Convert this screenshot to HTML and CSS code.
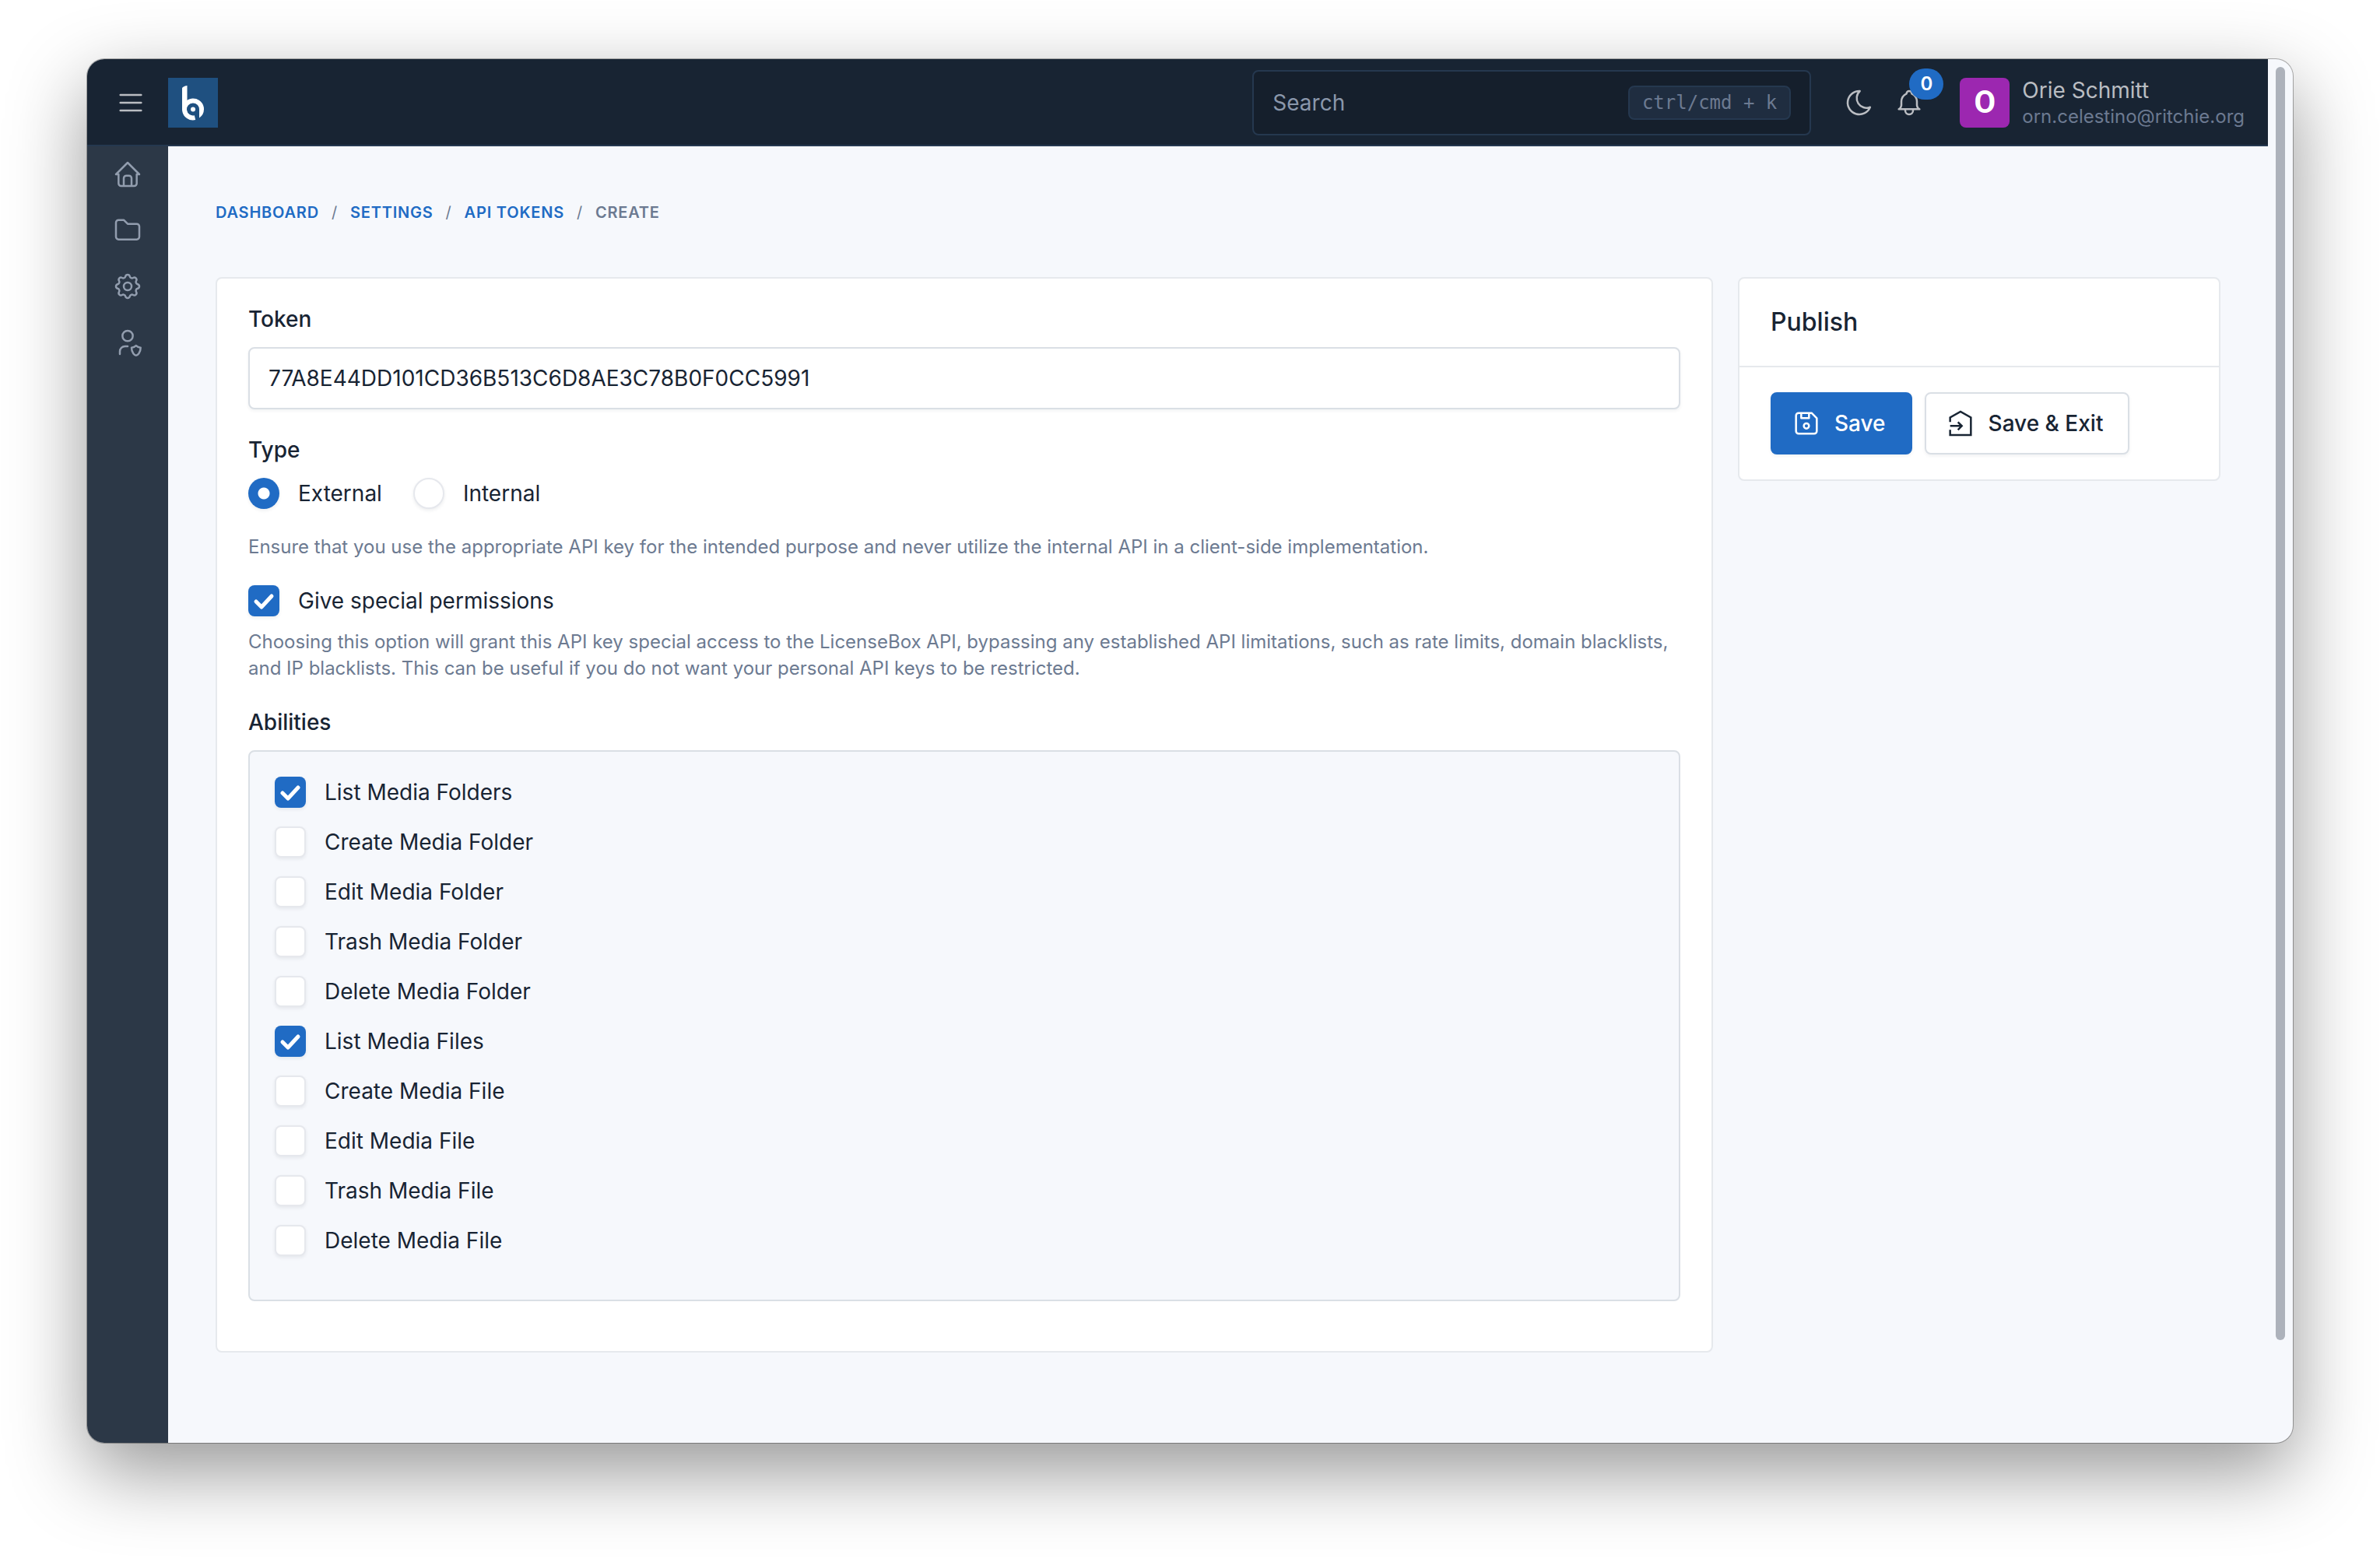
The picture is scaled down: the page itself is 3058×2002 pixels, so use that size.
FILE: index.html
```html
<!DOCTYPE html>
<html lang="en">
<head>
<meta charset="utf-8">
<title>Create API token</title>
<meta name="viewport" content="width=device-width, initial-scale=1">
<link rel="stylesheet" href="styles.css">
</head>
<body>
<div class="window">
  <div class="app">
    <header class="topbar">
      <button class="icon-button menu-toggle" type="button" aria-label="Toggle menu">
        <svg class="icon" viewBox="0 0 24 24"><path d="M4 6h16M4 12h16M4 18h16"/></svg>
      </button>
      <a class="logo" href="#" aria-label="Home">
        <svg viewBox="0 0 64 64"><path class="logo-fill" d="M18 41V13.500Q18.500 11 24.500 10V34zM40 40H46Q46 47.500 40 51.500z"/><path class="logo-stroke" d="M34.500 51.200A11 11 0 1 1 43 41"/><circle class="logo-fill" cx="32" cy="40.500" r="3"/></svg>
      </a>
      <label class="search">
        <input class="search-input" type="search" placeholder="Search" aria-label="Search">
        <kbd class="shortcut">ctrl/cmd + k</kbd>
      </label>
      <nav class="tools">
        <button class="icon-button" type="button" aria-label="Dark mode">
          <svg class="icon" viewBox="0 0 24 24"><path d="M12 3c.132 0 .263 0 .393 0a7.500 7.500 0 0 0 7.920 12.446a9 9 0 1 1 -8.313 -12.454z"/></svg>
        </button>
        <button class="icon-button" type="button" aria-label="Notifications">
          <svg class="icon" viewBox="0 0 24 24"><path d="M10 5a2 2 0 1 1 4 0a7 7 0 0 1 4 6v3a4 4 0 0 0 2 3h-16a4 4 0 0 0 2 -3v-3a7 7 0 0 1 4 -6M9 17v1a3 3 0 0 0 6 0v-1"/></svg>
          <span class="badge">0</span>
        </button>
      </nav>
      <a class="user" href="#">
        <span class="avatar">O</span>
        <span class="user-text">
          <span class="user-name">Orie Schmitt</span>
          <span class="user-email">orn.celestino@ritchie.org</span>
        </span>
      </a>
    </header>
    <div class="body">
      <nav class="sidebar" aria-label="Main">
        <a class="side-link" href="#" aria-label="Dashboard"><svg class="icon" viewBox="0 0 24 24"><path d="M5 12H3l9-9 9 9h-2M5 12v7a2 2 0 0 0 2 2h10a2 2 0 0 0 2-2v-7M9 21v-6a2 2 0 0 1 2-2h2a2 2 0 0 1 2 2v6"/></svg></a>
        <a class="side-link" href="#" aria-label="Media"><svg class="icon" viewBox="0 0 24 24"><path d="M5 4h4l3 3h7a2 2 0 0 1 2 2v8a2 2 0 0 1-2 2H5a2 2 0 0 1-2-2V6a2 2 0 0 1 2-2"/></svg></a>
        <a class="side-link" href="#" aria-label="Settings"><svg class="icon" viewBox="0 0 24 24"><path d="M10.325 4.317c.426 -1.756 2.924 -1.756 3.350 0a1.724 1.724 0 0 0 2.573 1.066c1.543 -.940 3.310 .826 2.370 2.370a1.724 1.724 0 0 0 1.065 2.572c1.756 .426 1.756 2.924 0 3.350a1.724 1.724 0 0 0 -1.066 2.573c.940 1.543 -.826 3.310 -2.370 2.370a1.724 1.724 0 0 0 -2.572 1.065c-.426 1.756 -2.924 1.756 -3.350 0a1.724 1.724 0 0 0 -2.573 -1.066c-1.543 .940 -3.310 -.826 -2.370 -2.370a1.724 1.724 0 0 0 -1.065 -2.572c-1.756 -.426 -1.756 -2.924 0 -3.350a1.724 1.724 0 0 0 1.066 -2.573c-.940 -1.543 .826 -3.310 2.370 -2.370c1 .608 2.296 .070 2.572 -1.065z"/><circle cx="12" cy="12" r="3"/></svg></a>
        <a class="side-link" href="#" aria-label="Administration"><svg class="icon" viewBox="0 0 24 24"><path d="M6 21v-2a4 4 0 0 1 4-4h2M22 16c0 4-2.500 6-3.500 6s-3.500-2-3.500-6c1 0 2.500-.500 3.500-1.500c1 1 2.500 1.500 3.500 1.500zM8 7a4 4 0 1 0 8 0a4 4 0 0 0-8 0"/></svg></a>
      </nav>
      <main class="content">
        <nav aria-label="Breadcrumb">
          <ol class="breadcrumb">
            <li><a href="#">Dashboard</a></li>
            <li><a href="#">Settings</a></li>
            <li><a href="#">API Tokens</a></li>
            <li aria-current="page">Create</li>
          </ol>
        </nav>
        <form class="row">
          <div class="col-main">
            <section class="card card-body">
              <div class="field">
                <label class="label" for="token">Token</label>
                <input class="text-input" id="token" type="text" value="77A8E44DD101CD36B513C6D8AE3C78B0F0CC5991">
              </div>
              <fieldset class="field">
                <legend class="label">Type</legend>
                <div class="radios">
                  <label class="check"><input class="box round" type="radio" name="type" checked>External</label>
                  <label class="check"><input class="box round" type="radio" name="type">Internal</label>
                </div>
                <p class="hint type-hint">Ensure that you use the appropriate API key for the intended purpose and never utilize the internal API in a client-side implementation.</p>
              </fieldset>
              <div class="field">
                <label class="check"><input class="box" type="checkbox" checked>Give special permissions</label>
                <p class="hint">Choosing this option will grant this API key special access to the LicenseBox API, bypassing any established API limitations, such as rate limits, domain blacklists, and IP blacklists. This can be useful if you do not want your personal API keys to be restricted.</p>
              </div>
              <fieldset class="field">
                <legend class="label">Abilities</legend>
                <div class="abilities">
                  <label class="check"><input class="box" type="checkbox" checked>List Media Folders</label>
                  <label class="check"><input class="box" type="checkbox">Create Media Folder</label>
                  <label class="check"><input class="box" type="checkbox">Edit Media Folder</label>
                  <label class="check"><input class="box" type="checkbox">Trash Media Folder</label>
                  <label class="check"><input class="box" type="checkbox">Delete Media Folder</label>
                  <label class="check"><input class="box" type="checkbox" checked>List Media Files</label>
                  <label class="check"><input class="box" type="checkbox">Create Media File</label>
                  <label class="check"><input class="box" type="checkbox">Edit Media File</label>
                  <label class="check"><input class="box" type="checkbox">Trash Media File</label>
                  <label class="check"><input class="box" type="checkbox">Delete Media File</label>
                </div>
              </fieldset>
            </section>
          </div>
          <div class="col-side">
            <section class="card">
              <h2 class="card-title">Publish</h2>
              <div class="card-body actions">
                <button class="button primary" type="submit"><svg class="icon" viewBox="0 0 24 24"><path d="M6 4h10l4 4v10a2 2 0 0 1-2 2H6a2 2 0 0 1-2-2V6a2 2 0 0 1 2-2M14 4v4H8V4"/><circle cx="12" cy="14" r="2"/></svg>Save</button>
                <button class="button" type="submit"><svg class="icon sharp" viewBox="0 0 24 24"><path d="M4 11V7.500L12 3l8 4.500V21H4v-4M4 14h9M10 11l3 3-3 3"/></svg>Save &amp; Exit</button>
              </div>
            </section>
          </div>
        </form>
      </main>
    </div>
  </div>
  <div class="scroll-track"><div class="scroll-thumb"></div></div>
</div>
</body>
</html>
```
FILE: styles.css
```css
* { box-sizing: border-box; }

body {
  margin: 0;
  min-height: 100vh;
  display: flex;
  padding: 76px 112px 148px;
  background: #fff;
  color: #182433;
  font: 400 28px/40px Inter, "Liberation Sans", sans-serif;
}

a { color: inherit; text-decoration: none; }
button, input { font: inherit; color: inherit; }
fieldset { margin: 0; padding: 0; border: 0; min-width: 0; }

.window {
  flex: 1;
  display: flex;
  overflow: hidden;
  border-radius: 22px;
  background: #f6f8fc;
  box-shadow: 0 0 0 1px rgba(0, 0, 0, .3), 0 36px 100px rgba(0, 0, 0, .42);
}

.app { flex: 1; min-width: 0; display: flex; flex-direction: column; }

.icon {
  display: block;
  width: 40px;
  height: 40px;
  flex: none;
  fill: none;
  stroke: currentColor;
  stroke-width: 1.5;
  stroke-linecap: round;
  stroke-linejoin: round;
}
.sharp { stroke-linecap: butt; stroke-linejoin: miter; }

/* Top bar */
.topbar {
  display: flex;
  align-items: center;
  height: 112px;
  padding: 2px 30px 0 0;
  border-bottom: 2px solid #25384f;
  background: #182433;
  color: #babdc2;
}

.icon-button { position: relative; padding: 0; border: 0; background: none; }
.menu-toggle { margin: 0 28px 0 36px; }

.logo { width: 64px; height: 64px; background: #1f5080; }
.logo svg { display: block; }
.logo-stroke { fill: none; stroke: #fff; stroke-width: 6; }
.logo-fill { fill: #fff; }

.search {
  display: flex;
  align-items: center;
  width: 718px;
  height: 84px;
  margin-left: auto;
  padding: 0 24px;
  border: 2px solid #25384f;
  border-radius: 8px;
  background: #151f2c;
}
.search-input {
  flex: 1;
  min-width: 0;
  padding: 0;
  border: 0;
  outline: 0;
  background: none;
}
.search-input::placeholder { color: #8a97ab; opacity: 1; }
.shortcut {
  padding: 0 16px;
  border: 2px solid #25384f;
  border-radius: 8px;
  background: #1f2d40;
  color: #6c7a91;
  font: 24px/40px "DejaVu Sans Mono", monospace;
}

.tools { display: flex; gap: 24px; margin: 0 45px 0 42px; }
.badge {
  position: absolute;
  left: 20px;
  top: -24px;
  min-width: 44px;
  height: 40px;
  border-radius: 20px;
  background: #206bc4;
  color: #fff;
  font-size: 24px;
  font-weight: 600;
  text-align: center;
}

.user { display: flex; align-items: center; gap: 16px; }
.avatar {
  width: 64px;
  height: 64px;
  border-radius: 8px;
  background: #9c27b0;
  color: #fff;
  font: 700 40px/64px Roboto, "Liberation Sans", sans-serif;
  text-align: center;
}
.user-text { display: flex; flex-direction: column; gap: 8px; }
.user-name { line-height: 28px; }
.user-email { color: #6c7a91; font-size: 24px; line-height: 24px; }

/* Side navigation */
.body { flex: 1; display: flex; }
.sidebar { width: 104px; background: #2c3847; color: #929dae; }
.side-link { display: flex; justify-content: center; padding: 16px 0; }

/* Content */
.content { flex: 1; min-width: 0; padding: 68px 45px 0; }

.breadcrumb {
  display: flex;
  margin: 0 0 66px;
  padding: 0 16px;
  list-style: none;
  color: #6c7a91;
  font-size: 20px;
  font-weight: 600;
  line-height: 34px;
  letter-spacing: .04em;
  text-transform: uppercase;
}
.breadcrumb a { color: #206bc4; }
.breadcrumb li + li::before { content: "/"; padding: 0 16px; font-weight: 400; }

.row { display: flex; align-items: flex-start; }
.col-main { width: 75%; padding: 0 16px; }
.col-side { width: 25%; padding: 0 16px; }

.card { border: 2px solid #e6e9ed; border-radius: 8px; background: #fff; }
.card-body { padding: 32px 40px; }
.card-title {
  margin: 0;
  padding: 32px 40px;
  border-bottom: 2px solid #e6e9ed;
  font-size: 32px;
  font-weight: 500;
  line-height: 48px;
}

.field { margin-bottom: 32px; }
.label { display: block; margin-bottom: 16px; padding: 0; font-weight: 500; }

.text-input {
  display: block;
  width: 100%;
  height: 80px;
  padding: 0 24px;
  border: 2px solid #dadfe5;
  border-radius: 8px;
  background: #fff;
  box-shadow: 0 2px 4px rgba(24, 36, 51, .06);
}

.radios { display: flex; gap: 40px; }
.check { display: flex; gap: 24px; }
.box {
  appearance: none;
  flex: none;
  width: 40px;
  height: 40px;
  margin: 0;
  border: 2px solid #e6e8ed;
  border-radius: 8px;
  background: #fff center / 100% no-repeat;
  box-shadow: 0 2px 4px rgba(24, 36, 51, .08);
}
.box:checked {
  border: 0;
  background-color: #206bc4;
  background-image: url("data:image/svg+xml,%3Csvg xmlns='http://www.w3.org/2000/svg' viewBox='0 0 40 40'%3E%3Cpath d='M10 21l7 7L30 14' fill='none' stroke='%23fff' stroke-width='5' stroke-linecap='round' stroke-linejoin='round'/%3E%3C/svg%3E");
}
.round { border-radius: 50%; }
.round:checked { background-image: radial-gradient(circle, #fff 7px, transparent 8px); }

.hint { margin: 16px 0 0; color: #6c7a91; font-size: 24px; line-height: 34px; }
.type-hint { margin-top: 32px; }

.abilities {
  display: flex;
  flex-direction: column;
  gap: 24px;
  padding: 32px 32px 56px;
  border: 2px solid #dadfe5;
  border-radius: 8px;
  background: #f6f8fc;
}

.actions { display: flex; gap: 16px; }
.button {
  display: flex;
  align-items: center;
  gap: 16px;
  height: 80px;
  padding: 0 32px 0 24px;
  border: 2px solid #dadfe5;
  border-radius: 8px;
  background: #fff;
  box-shadow: 0 2px 4px rgba(24, 36, 51, .06);
  font-weight: 500;
}
.primary { border-color: #206bc4; background: #206bc4; color: #fff; }

/* Scroll bar */
.scroll-track { width: 32px; padding: 10px 10px 132px; display: flex; }
.scroll-thumb { flex: 1; border-radius: 6px; background: #adb2bb; }
```
